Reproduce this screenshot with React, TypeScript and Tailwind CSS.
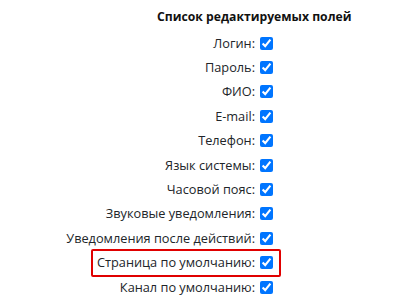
const fields = [
  'Логин:',
  'Пароль:',
  'ФИО:',
  'E-mail:',
  'Телефон:',
  'Язык системы:',
  'Часовой пояс:',
  'Звуковые уведомления:',
  'Уведомления после действий:',
  'Страница по умолчанию:',
  'Канал по умолчанию:',
];

export default function App() {
  return (
    <div
      className="h-[306px] w-[405px] overflow-hidden bg-white text-[12.75px] text-[#212529]"
      style={{ fontFamily: '"Open Sans", "Noto Sans", sans-serif' }}
    >
      <div className="ml-[157px] pt-[7px] text-[12.2px] font-bold leading-[20px] text-[#111]">
        Список редактируемых полей
      </div>
      <div className="mt-[4px] flex w-[273px] flex-col items-end">
        {fields.map((f, i) => (
          <div key={f} className="relative flex h-[24.4px] items-center gap-[5px]">
            {i === 9 && (
              <span className="pointer-events-none absolute -left-[6px] -right-[8px] -top-[2px] -bottom-[2px] rounded-[2px] border-2 border-[#e00000]" />
            )}
            <span className="leading-[19px] whitespace-nowrap">{f}</span>
            <input type="checkbox" defaultChecked className="m-0 h-[13px] w-[13px]" />
          </div>
        ))}
      </div>
    </div>
  );
}
